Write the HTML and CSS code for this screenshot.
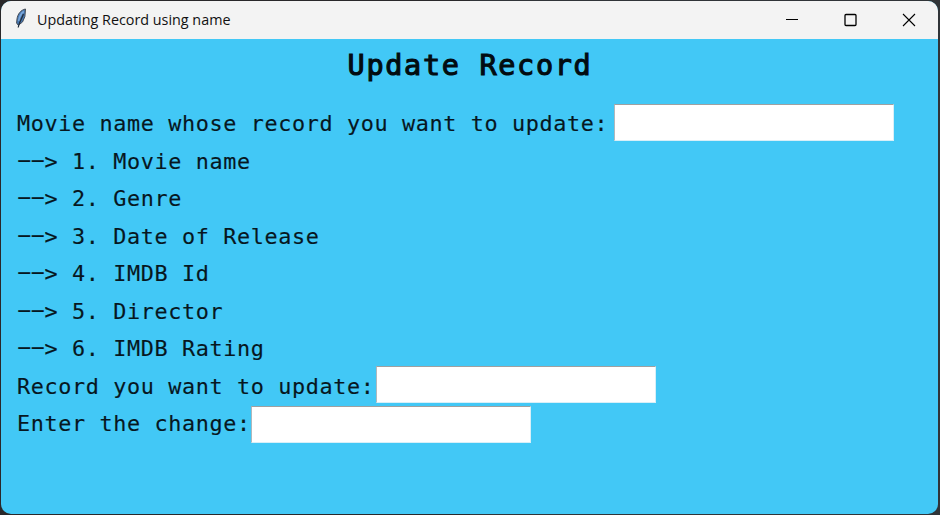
FILE: index.html
```html
<!DOCTYPE html>
<html lang="en">
<head>
<meta charset="utf-8">
<title>Updating Record using name</title>
<link rel="stylesheet" href="styles.css">
</head>
<body>
<div class="window">
  <header class="titlebar">
    <svg class="feather" width="14" height="22" viewBox="0 0 14 22">
      <path d="M11.500 1C7 1.800 3.600 6 3 11L2.600 15 4.300 17.300 8.500 14 10.900 8.500Z" fill="#4779b5" stroke="#454b55" stroke-width="1"/>
      <path d="M9.800 3.500C7.500 5 5.500 8.500 4.600 13" fill="none" stroke="#7ba8dc" stroke-width="1.500"/>
      <path d="M9.400 6C8.500 9.500 5 14 4.200 19.500" fill="none" stroke="#202c3b" stroke-width="1.200"/>
    </svg>
    <span class="caption">Updating Record using name</span>
    <div class="controls">
      <svg width="14" height="14" viewBox="0 0 14 14"><path d="M1 6.500H13" stroke="#000"/></svg>
      <svg width="14" height="14" viewBox="0 0 14 14"><rect x="1" y="1.500" width="11" height="11" rx="1" fill="none" stroke="#000" stroke-width="1.300"/></svg>
      <svg width="14" height="14" viewBox="0 0 14 14"><path d="M1 1L13 13M13 1L1 13" stroke="#000" stroke-width="1.100"/></svg>
    </div>
  </header>
  <main class="content">
    <h1>Update Record</h1>
    <div class="form">
      <div class="row"><label for="movie">Movie name whose record you want to update:</label><input id="movie" class="entry entry-movie"></div>
      <div class="row"><span class="dashes">--</span>&gt; 1. Movie name</div>
      <div class="row"><span class="dashes">--</span>&gt; 2. Genre</div>
      <div class="row"><span class="dashes">--</span>&gt; 3. Date of Release</div>
      <div class="row"><span class="dashes">--</span>&gt; 4. IMDB Id</div>
      <div class="row"><span class="dashes">--</span>&gt; 5. Director</div>
      <div class="row"><span class="dashes">--</span>&gt; 6. IMDB Rating</div>
      <div class="row"><label for="record">Record you want to update:</label><input id="record" class="entry"></div>
      <div class="row"><label for="change">Enter the change:</label><input id="change" class="entry entry-change"></div>
    </div>
  </main>
</div>
</body>
</html>
```
FILE: styles.css
```css
* { box-sizing: border-box; }
body {
  margin: 0;
  height: 515px;
  padding: 1px 2px 1px 1px;
  background: linear-gradient(90deg, #29282a 50%, #303438 50%);
  overflow: hidden;
}
.window {
  height: 513px;
  border-radius: 10px;
  background: #42c8f6;
  overflow: hidden;
}
.titlebar {
  display: flex;
  align-items: center;
  height: 38px;
  padding: 0 22px 0 13px;
  background: #f3f3f3;
}
.feather { flex: none; margin: -2px 9px 0 0; }
.caption {
  padding-bottom: 2px;
  font: 14.35px "Open Sans", sans-serif;
  color: #111;
  white-space: nowrap;
}
.controls {
  display: flex;
  gap: 44.5px;
  margin-left: auto;
}
.content {
  font-family: "DejaVu Sans Mono", monospace;
  color: #07171f;
}
h1 {
  height: 65px;
  margin: 0;
  padding: 7px 0 0 1px;
  text-align: center;
  font-size: 28.5px;
  font-weight: 400;
  line-height: 40px;
  letter-spacing: 1.68px;
  color: #020c11;
  -webkit-text-stroke: 1.1px #020c11;
}
.form { padding-left: 16px; }
.row {
  display: flex;
  height: 37.5px;
  font-size: 21.8px;
  line-height: 39px;
  letter-spacing: 0.625px;
  white-space: pre;
  -webkit-text-stroke: 0.15px #07171f;
}
.dashes {
  flex: none;
  width: 27.5px;
  font-family: Roboto, sans-serif;
  letter-spacing: 0;
  transform: translate(0.5px, -1px) scaleX(2.25);
  transform-origin: left;
}
.entry {
  flex: none;
  width: 280px;
  height: 37px;
  margin: -1px 0 0 1.5px;
  padding: 0 4px;
  border: 1px solid #d8eff8;
  border-top-color: #a0a0a0;
  border-left-color: #b0b8bc;
  border-radius: 0;
  background: #fff;
  font: inherit;
  outline: none;
}
.entry-movie { margin: 0 0 0 5.5px; }
.entry-change { margin-top: 2px; margin-left: 0.5px; }
```
